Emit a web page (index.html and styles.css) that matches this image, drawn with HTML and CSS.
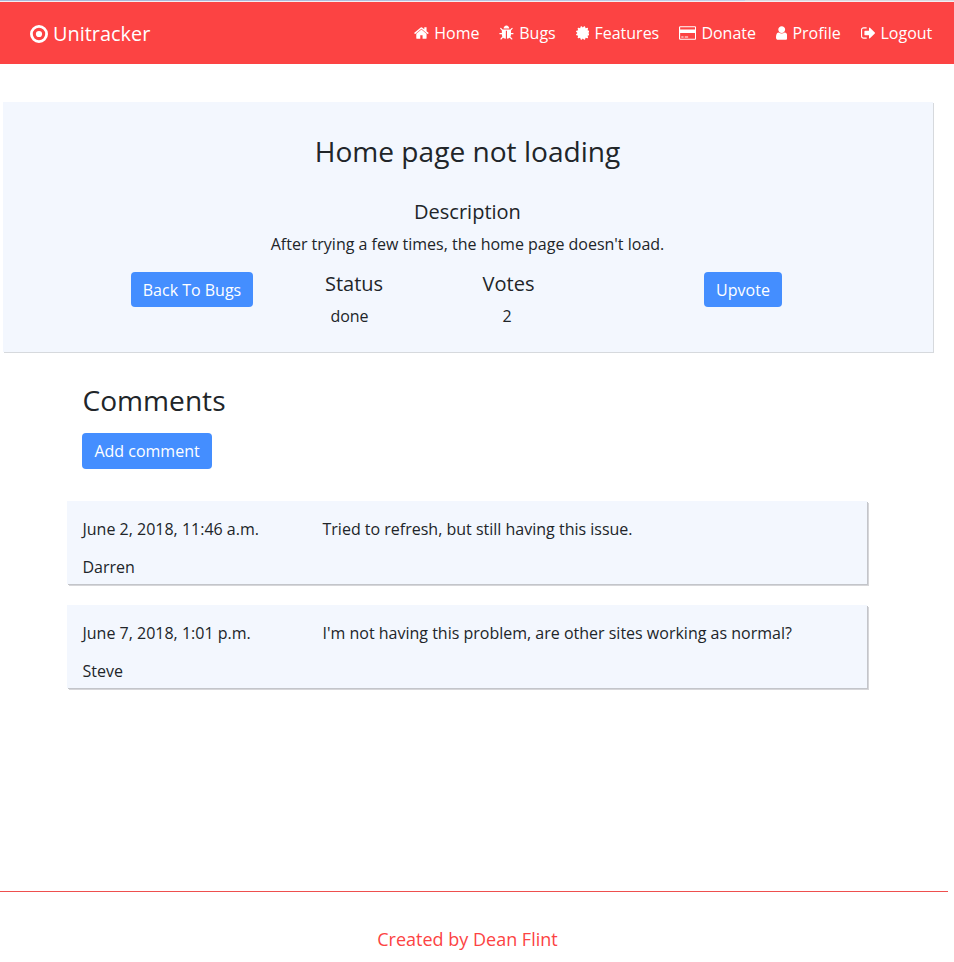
FILE: index.html
```html
<!DOCTYPE html>
<html lang="en">
<head>
<meta charset="utf-8">
<title>Unitracker</title>
<link rel="stylesheet" href="styles.css">
</head>
<body>
<div class="strip"></div>
<header class="navbar">
  <a class="brand"><svg class="brand-icon" viewBox="0 0 18 18"><circle cx="9" cy="9" r="7.6" fill="none" stroke="currentColor" stroke-width="2.8"/><circle cx="9" cy="9" r="3.1"/></svg>Unitracker</a>
  <nav class="links">
    <a class="link"><svg class="icon" viewBox="64 0 1664 1792"><path d="M1472 992v480q0 26-19 45t-45 19h-384v-384h-256v384h-384q-26 0-45-19t-19-45v-480q0-1 .5-3t.5-3l575-474 575 474q1 2 1 6zm223-69l-62 74q-8 9-21 11h-3q-13 0-21-7l-692-577-692 577q-12 8-24 7-13-2-21-11l-62-74q-8-10-7-23.5t11-21.5l719-599q32-26 76-26t76 26l244 204v-195q0-14 9-23t23-9h192q14 0 23 9t9 23v408l219 182q10 8 11 21.5t-7 23.5z"/></svg>Home</a>
    <a class="link"><svg class="icon" viewBox="64 0 1664 1792"><path d="M1696 960q0 26-19 45t-45 19h-224q0 171-67 290l208 209q19 19 19 45t-19 45q-18 19-45 19t-45-19l-198-197q-5 5-15 13t-42 28.5-65 36.5-82 29-97 13v-896h-128v896q-51 0-101.5-13.5t-87-33-66-39-43.5-32.5l-15-14-183 207q-20 21-48 21-24 0-43-16-19-18-20.5-44.5t15.5-46.5l202-227q-58-114-58-274h-224q-26 0-45-19t-19-45 19-45 45-19h224v-294l-173-173q-19-19-19-45t19-45 45-19 45 19l173 173h844l173-173q19-19 45-19t45 19 19 45-19 45l-173 173v294h224q26 0 45 19t19 45zm-480-576h-640q0-133 93.5-226.5t226.5-93.5 226.5 93.5 93.5 226.5z"/></svg>Bugs</a>
    <a class="link"><svg class="icon" viewBox="128 0 1536 1792"><path d="M1504 896l138 135q30 28 20 70-12 41-52 51l-188 48 53 186q12 41-19 70-29 31-70 19l-186-53-48 188q-10 40-51 52-12 2-19 2-31 0-51-22l-135-138-135 138q-28 30-70 20-41-11-51-52l-48-188-186 53q-41 12-70-19-31-29-19-70l53-186-188-48q-40-10-52-51-10-42 20-70l138-135-138-135q-30-28-20-70 12-41 52-51l188-48-53-186q-12-41 19-70 29-31 70-19l186 53 48-188q10-41 51-51 41-12 70 19l135 139 135-139q29-30 70-19 41 10 51 51l48 188 186-53q41-12 70 19 31 29 19 70l-53 186 188 48q40 10 52 51 10 42-20 70z"/></svg>Features</a>
    <a class="link"><svg class="icon" viewBox="0 0 1920 1792"><path d="M1760 128q66 0 113 47t47 113v1216q0 66-47 113t-113 47h-1600q-66 0-113-47t-47-113v-1216q0-66 47-113t113-47h1600zm-1600 128q-13 0-22.5 9.5t-9.5 22.5v224h1664v-224q0-13-9.5-22.5t-22.5-9.5h-1600zm1600 1280q13 0 22.5-9.5t9.5-22.5v-608h-1664v608q0 13 9.5 22.5t22.5 9.5h1600zm-1504-128v-128h256v128h-256zm384 0v-128h384v128h-384z"/></svg>Donate</a>
    <a class="link"><svg class="icon" viewBox="256 0 1280 1792"><path d="M1536 1399q0 109-62.5 187t-150.5 78h-854q-88 0-150.5-78t-62.5-187q0-85 8.5-160.5t31.5-152 58.5-131 94-89 134.5-34.5q131 128 313 128t313-128q76 0 134.5 34.5t94 89 58.5 131 31.5 152 8.5 160.5zm-256-887q0 159-112.5 271.5t-271.5 112.5-271.5-112.5-112.5-271.5 112.5-271.5 271.5-112.5 271.5 112.5 112.5 271.5z"/></svg>Profile</a>
    <a class="link"><svg class="icon" viewBox="64 0 1664 1792"><path d="M704 1440q0 4 1 20t.5 26.5-3 23.5-10 19.5-20.5 6.5h-320q-119 0-203.5-84.5t-84.5-203.5v-704q0-119 84.5-203.5t203.5-84.5h320q13 0 22.5 9.5t9.5 22.5q0 4 1 20t.5 26.5-3 23.5-10 19.5-20.5 6.5h-320q-66 0-113 47t-47 113v704q0 66 47 113t113 47h312l11.5 1 11.5 3 8 5.5 7 9 2 13.5zm928-544q0 26-19 45l-544 544q-19 19-45 19t-45-19-19-45v-288h-448q-26 0-45-19t-19-45v-384q0-26 19-45t45-19h448v-288q0-26 19-45t45-19 45 19l544 544q19 19 19 45z"/></svg>Logout</a>
  </nav>
</header>
<main>
  <section class="ticket">
    <h1 class="title">Home page not loading</h1>
    <h2 class="subtitle">Description</h2>
    <p class="text">After trying a few times, the home page doesn't load.</p>
    <div class="details">
      <div class="cell"><a class="button">Back To Bugs</a></div>
      <div class="fact"><h2 class="subtitle">Status</h2><p class="text value">done</p></div>
      <div class="fact"><h2 class="subtitle">Votes</h2><p class="text value-votes">2</p></div>
      <div class="cell"><a class="button">Upvote</a></div>
    </div>
  </section>
  <section class="comments">
    <h1 class="title">Comments</h1>
    <a class="button add">Add comment</a>
    <article class="comment">
      <div class="meta"><p>June 2, 2018, 11:46 a.m.</p><p>Darren</p></div>
      <p>Tried to refresh, but still having this issue.</p>
    </article>
    <article class="comment">
      <div class="meta"><p>June 7, 2018, 1:01 p.m.</p><p>Steve</p></div>
      <p>I'm not having this problem, are other sites working as normal?</p>
    </article>
  </section>
</main>
<footer class="footer">Created by Dean Flint</footer>
</body>
</html>
```
FILE: styles.css
```css
* { box-sizing: border-box; margin: 0; }
body {
  display: flex;
  flex-direction: column;
  height: 962px;
  overflow: hidden;
  background: #fff;
  color: #212529;
  font: 16px/24px "Open Sans", sans-serif;
}
h1, h2 { font-weight: 400; }
.strip {
  flex: none;
  width: 100%;
  height: 2px;
  border-bottom: 1px solid #f4eef2;
  background: linear-gradient(to right, #a9b9d8 0 240px, #c3d0e8 745px, #d9d9de 745px);
}
.navbar {
  display: flex;
  justify-content: space-between;
  align-items: center;
  height: 62px;
  padding: 0 21.7px 0 30px;
  background: #fc4343;
  color: #fff;
}
.brand { display: flex; align-items: center; gap: 5px; padding-top: 2px; font-size: 19.9px; }
.brand-icon { width: 18px; height: 18px; margin-top: -1px; fill: currentColor; }
.links { display: flex; gap: 20px; }
.link { display: flex; align-items: center; gap: 5px; }
.icon { height: 16px; fill: currentColor; }
.ticket {
  width: 930px;
  height: 250px;
  margin: 38px 0 0 3px;
  padding: 32px 1px 0 0;
  background: #f3f7fe;
  box-shadow: 1px 1px 0 #d6d9dd;
  text-align: center;
}
.title { font-size: 28.1px; line-height: 35px; }
.subtitle { font-size: 20px; line-height: 24px; }
.ticket > .subtitle { margin-top: 31px; }
.text { margin-top: 8px; }
.details {
  display: grid;
  grid-template-columns: 162px 162px 147px 322px;
  margin: 16px 0 0 108px;
}
.value { padding-right: 9px; }
.value-votes { padding-right: 3px; }
.button {
  display: inline-block;
  height: 35px;
  padding: 1px 12px 0;
  border-radius: 4px;
  background: #448eff;
  color: #fff;
  line-height: 35px;
}
.comments { width: 801px; margin: 31px 0 0 67px; }
.comments > .title { margin-left: 15.5px; }
.add { height: 36px; margin: 14.5px 0 11px 15.4px; }
.comment {
  display: grid;
  grid-template-columns: 240px 1fr;
  width: 800px;
  height: 83px;
  margin-top: 21px;
  padding: 16px 15px 0 15.5px;
  background: #f3f7fe;
  box-shadow: 1px 1px 0 #c3c5ca, 2px 2px 0 #d6d6d9;
}
.meta { display: grid; gap: 14px; align-content: start; }
.footer {
  width: 948px;
  height: 71px;
  margin-top: auto;
  padding: 35px 13px 0 0;
  border-top: 1px solid #ee4f4e;
  color: #fc4343;
  font-size: 18px;
  text-align: center;
}
```
